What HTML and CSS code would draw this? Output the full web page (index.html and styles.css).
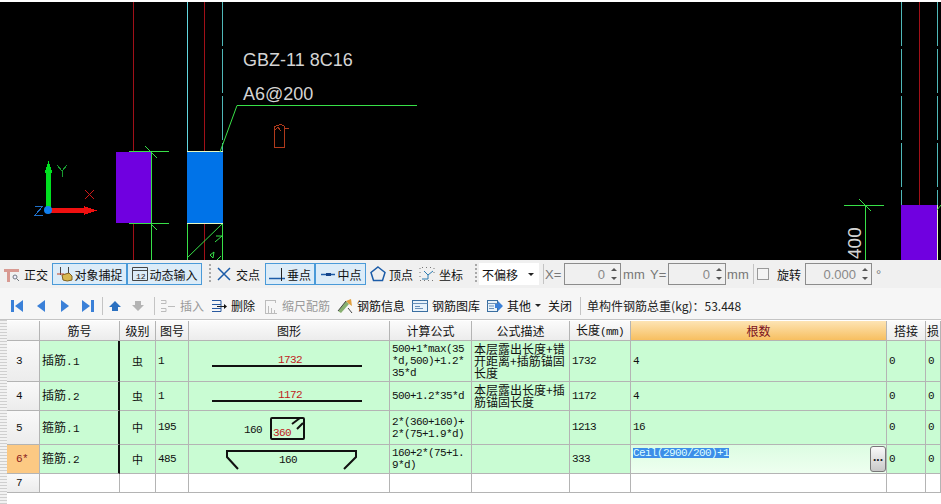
FILE: index.html
```html
<!DOCTYPE html>
<html lang="zh-CN">
<head>
<meta charset="utf-8">
<title>钢筋编辑</title>
<link rel="stylesheet" href="styles.css">
</head>
<body>
<svg class="canvas" viewBox="0 0 941 258" width="941" height="258">
  <g transform="translate(0,-2)">
    <g class="l-red"><path d="M133.500 2V152M133.500 223V260M204.500 2V152M204.500 223V260M919.500 2V205"/></g>
    <path class="l-cyan" d="M187.500 2V152"/>
    <path class="l-cyan dash" d="M222.500 2V152M901.500 2V205M937.500 2V205"/>
    <rect class="violet" x="116" y="152" width="35" height="71"/>
    <rect class="blue" x="187" y="152" width="36" height="71"/>
    <rect class="violet" x="901" y="205" width="36" height="55"/>
    <path class="l-pale" d="M187 151.500H223M187 223.500H223M937.500 205V260"/>
    <g class="l-green">
      <path d="M129 151.500H169M151.500 151V260M145 146L157 158M129 223.500H169M151 224L157 230"/>
      <path d="M220 152L237 105.500H417"/>
      <path d="M187.500 224V260M222.500 224V260M187 258L222 224M215 242L222 236L216 236M210 255L214 252L213 258ZM221 256L217 260"/>
      <path d="M844 205.500H884M865.500 205V260M859 199L871 211M937 210L941 205"/>
    </g>
    <path class="l-orange" d="M274 147V127Q280 123 284 126L285 128H289M274 131L278 127L281 131M284 128V147H274"/>
    <text class="cad" x="243" y="66">GBZ-11 8C16</text>
    <text class="cad" x="243" y="100">A6@200</text>
    <text class="cad dim" transform="translate(861,259) rotate(-90)">400</text>
    <g>
      <rect class="f-green" x="46" y="172" width="5" height="38"/>
      <path class="f-green" d="M48.500 161L52.500 173H44.500Z"/>
      <rect class="f-red" x="50" y="208" width="36" height="5"/>
      <path class="f-red" d="M97 210.500L84 206V215Z"/>
      <circle class="f-blue" cx="48" cy="210" r="4"/>
      <path class="l-dgreen" d="M57 165L62 171L67 165M62 171V177"/>
      <path class="l-dred" d="M85 190L94 199M94 190L85 199"/>
      <path class="l-dblue" d="M35 206H43L35 215H43"/>
    </g>
  </g>
</svg>

<div class="bar bar-one">
  <div class="tool">
    <svg class="ico" viewBox="0 0 16 16"><path class="i-pink" d="M0 3H15V6H6V16H3V6H0Z"/><circle class="i-glass" cx="11" cy="11" r="2"/><path class="i-glass" d="M12.500 12.500L15 15"/></svg>
    <span>正交</span>
  </div>
  <div class="toggle w75 ml4">
    <svg class="ico" viewBox="0 0 16 16"><path class="i-gold" d="M5 9L12 7L15 10V14Q10 16 6 14Z"/><path class="i-line" d="M3.500 1V9M11.500 1V7"/><path class="i-redline" d="M0 8H7"/></svg>
    <span>对象捕捉</span>
  </div>
  <div class="toggle w75">
    <svg class="ico" viewBox="0 0 16 16"><path class="i-line" d="M0.500 1.500H15.500M0.500 4.500H15.500M0.500 1.500V14.500H15.500V1.500"/><text class="i-num" x="4" y="13">12</text></svg>
    <span>动态输入</span>
  </div>
  <div class="grip ml7"></div>
  <div class="tool ml5">
    <svg class="ico" viewBox="0 0 16 16"><path class="i-blue" d="M2 2L14 14M14 2L2 14"/></svg>
    <span>交点</span>
  </div>
  <div class="toggle w50 ml5">
    <svg class="ico" viewBox="0 0 16 16"><path class="i-blue" d="M0 12.500H16"/><path class="i-black" d="M12.500 2V15"/></svg>
    <span>垂点</span>
  </div>
  <div class="toggle w51">
    <svg class="ico" viewBox="0 0 16 16"><path class="i-blue" d="M1 8.500H15"/><rect class="i-dark" x="6" y="7" width="5" height="3"/></svg>
    <span>中点</span>
  </div>
  <div class="tool ml4 gap3">
    <svg class="ico" viewBox="0 0 16 16"><path class="i-blue" d="M8 1L15 6.500L12.500 14.500H3.500L1 6.500Z"/></svg>
    <span>顶点</span>
  </div>
  <div class="tool ml6">
    <svg class="ico" viewBox="0 0 16 16"><path class="i-dots" d="M1 2V14M15 2V9M1 14.500H14M3 1.500H13"/><path class="i-blue thin" d="M5 5L9 9L14 5M9 9V13M3 13H9"/></svg>
    <span>坐标</span>
  </div>
  <div class="grip ml12"></div>
  <div class="select ml2"><span>不偏移</span><i class="caret"></i></div>
  <div class="vsep ml4"></div>
  <span class="lab w17 ml1">X=</span>
  <div class="spin w57 ml2"><span>0</span><b class="arrows"><i class="up"></i><i class="down"></i></b></div>
  <span class="lab w23 ml2">mm</span>
  <span class="lab w16 ml4">Y=</span>
  <div class="spin w58 ml2"><span>0</span><b class="arrows"><i class="up"></i><i class="down"></i></b></div>
  <span class="lab w22 ml1">mm</span>
  <div class="vsep ml4"></div>
  <div class="check ml3"></div>
  <span class="label ml8">旋转</span>
  <div class="spin w67 ml4"><span>0.000</span><b class="arrows"><i class="up"></i><i class="down"></i></b></div>
  <span class="lab ml4">°</span>
</div>

<div class="bar bar-two">
  <svg class="nav ml10" viewBox="0 0 14 14"><path class="n-blue" d="M1 1H4V13H1ZM13 1V13L5 7Z"/></svg>
  <svg class="nav ml10" viewBox="0 0 14 14"><path class="n-blue" d="M11 1V13L3 7Z"/></svg>
  <svg class="nav ml10" viewBox="0 0 14 14"><path class="n-blue" d="M3 1V13L11 7Z"/></svg>
  <svg class="nav ml9" viewBox="0 0 14 14"><path class="n-blue" d="M1 1V13L9 7ZM10 1H13V13H10Z"/></svg>
  <div class="vsep tall ml7"></div>
  <svg class="nav ml5" viewBox="0 0 14 14"><path class="n-navy" d="M7 2L13 8H10V12H4V8H1Z"/></svg>
  <svg class="nav ml9" viewBox="0 0 14 14"><path class="n-gray" d="M7 12L13 6H10V2H4V6H1Z"/></svg>
  <div class="vsep tall ml9"></div>
  <div class="tool off ml5">
    <svg class="ico" viewBox="0 0 16 16"><path class="i-faint" d="M1 2.500H6V5.500H1M1 10.500H6V13.500H1M8 8.500H15"/></svg>
    <span>插入</span>
  </div>
  <div class="tool ml7">
    <svg class="ico" viewBox="0 0 16 16"><path class="i-navy" d="M1 2.500H10V13.500H1M1 6.500H10M1 10.500H10"/><path class="i-black" d="M6 8.500H14"/><path class="i-tip" d="M13 6L16 8.500L13 11Z"/></svg>
    <span>删除</span>
  </div>
  <div class="tool off ml9 gap5">
    <svg class="ico narrow" viewBox="0 0 13 16"><path class="i-faint" d="M1 2.500H11M11.500 2V5M1.500 2V15M4.500 15V8M7.500 15V10M10.500 15V12M1 15.500H13"/></svg>
    <span>缩尺配筋</span>
  </div>
  <div class="tool ml7">
    <svg class="ico" viewBox="0 0 16 16"><path class="i-green-fill" d="M1 13L9 3L12 6L4 15Z"/><path class="i-orange-fill" d="M9 3L14 1L15 8L12 6Z"/><path class="i-line" d="M1 13L9 3M11 10L15 15"/></svg>
    <span>钢筋信息</span>
  </div>
  <div class="tool ml7">
    <svg class="ico" viewBox="0 0 16 16"><rect class="i-win" x="0.500" y="2.500" width="15" height="11"/><path class="i-winline" d="M0.500 5.500H15.500M3 8.500H8M3 10.500H11"/></svg>
    <span>钢筋图库</span>
  </div>
  <div class="tool ml7">
    <svg class="ico" viewBox="0 0 16 16"><rect class="i-win" x="0.500" y="2.500" width="10" height="11"/><path class="i-winline" d="M0.500 5.500H10.500M2 8H7M2 10.500H7"/><path class="i-arrow" d="M8 6H11V3L16 8L11 13V10H8Z"/></svg>
    <span>其他</span>
  </div>
  <i class="caret small ml4"></i>
  <span class="label ml7">关闭</span>
  <div class="vsep tall ml8"></div>
  <span class="label ml6 total">单构件钢筋总重(kg)：53.448</span>
</div>

<div class="grid-wrap">
  <div class="gutter"></div>
  <table class="grid">
    <colgroup>
      <col class="c33"><col class="c80"><col class="c36"><col class="c33"><col class="c201"><col class="c82"><col class="c98"><col class="c61"><col class="c256"><col class="c39"><col class="c15">
    </colgroup>
    <thead>
      <tr class="r-head">
        <th></th><th>筋号</th><th>级别</th><th>图号</th><th>图形</th><th>计算公式</th><th>公式描述</th><th>长度<span class="mono">(mm)</span></th><th class="active">根数</th><th>搭接</th><th>损</th>
      </tr>
    </thead>
    <tbody>
      <tr class="r41">
        <th class="num">3</th><td class="name">插筋<span class="mono">.1</span></td><td class="grade">虫</td><td class="mono">1</td>
        <td class="fig"><svg width="200" height="40" viewBox="0 0 200 40"><path class="bar-line" d="M23 25H173"/><text class="t-red" x="101" y="22">1732</text></svg></td>
        <td class="mono formula">500+1*max(35<br>*d,500)+1.2*<br>35*d</td>
        <td class="desc">本层露出长度+错<br>开距离+插筋锚固<br>长度</td>
        <td class="mono">1732</td><td class="mono">4</td><td class="mono">0</td><td class="mono">0</td>
      </tr>
      <tr class="r29">
        <th class="num">4</th><td class="name">插筋<span class="mono">.2</span></td><td class="grade">虫</td><td class="mono">1</td>
        <td class="fig"><svg width="200" height="28" viewBox="0 0 200 28"><path class="bar-line" d="M23 19H173"/><text class="t-red" x="101" y="16">1172</text></svg></td>
        <td class="mono formula">500+1.2*35*d</td>
        <td class="desc">本层露出长度+插<br>筋锚固长度</td>
        <td class="mono">1172</td><td class="mono">4</td><td class="mono">0</td><td class="mono">0</td>
      </tr>
      <tr class="r34">
        <th class="num">5</th><td class="name">箍筋<span class="mono">.1</span></td><td class="grade">中</td><td class="mono">195</td>
        <td class="fig"><svg width="200" height="33" viewBox="0 0 200 33"><text class="t-black" x="64" y="22">160</text><rect class="stirrup" x="82" y="7" width="33" height="21" rx="1"/><path class="stirrup" d="M103 13L111 7M108 18L114 12"/><text class="t-red" x="93" y="25">360</text></svg></td>
        <td class="mono formula">2*(360+160)+<br>2*(75+1.9*d)</td>
        <td class="desc"></td>
        <td class="mono">1213</td><td class="mono">16</td><td class="mono">0</td><td class="mono">0</td>
      </tr>
      <tr class="r29">
        <th class="num current">6*</th><td class="name">箍筋<span class="mono">.2</span></td><td class="grade">中</td><td class="mono">485</td>
        <td class="fig"><svg width="200" height="28" viewBox="0 0 200 28"><path class="stirrup" d="M49 24L38 12V6H167V12L155 24"/><text class="t-black" x="99" y="18">160</text></svg></td>
        <td class="mono formula">160+2*(75+1.<br>9*d)</td>
        <td class="desc"></td>
        <td class="mono">333</td>
        <td class="editor"><div class="edit-box"><span class="mono selected">Ceil(2900/200)+1</span><span class="more">...</span></div></td>
        <td class="mono">0</td><td class="mono">0</td>
      </tr>
      <tr class="r19 empty">
        <th class="num">7</th><td></td><td></td><td></td><td></td><td></td><td></td><td></td><td></td><td></td><td></td>
      </tr>
    </tbody>
  </table>
</div>
</body>
</html>
```
FILE: styles.css
```css
* { box-sizing: border-box; }
html, body { margin: 0; padding: 0; }
body {
  width: 941px; height: 504px; overflow: hidden; background: #fff; padding-top: 2px;
  font-family: "Noto Sans CJK SC", "Liberation Sans", sans-serif; font-size: 12px; color: #111;
}

/* CAD canvas */
.canvas { display: block; background: #000; }
.canvas path, .canvas rect { shape-rendering: crispEdges; }
.l-red path, .l-red { fill: none; stroke: #a01018; }
.l-cyan { fill: none; stroke: #62d6df; }
.dash { stroke-dasharray: 44 3; stroke: #4fb8b8; }
.violet { fill: #7000e0; }
.blue { fill: #0073e8; }
.l-pale { fill: none; stroke: #e8f8c0; }
.l-green path { fill: none; stroke: #38e048; shape-rendering: auto; }
.l-orange { fill: none; stroke: #b03a1c; }
.cad { font-family: "Liberation Sans", sans-serif; font-size: 18px; fill: #d4d4d4; }
.dim { font-size: 19px; }
.f-green { fill: #00e020; }
.f-red { fill: #f01010; }
.f-blue { fill: #1080f0; }
.l-dgreen { fill: none; stroke: #189a30; }
.l-dred { fill: none; stroke: #d01818; }
.l-dblue { fill: none; stroke: #2070c8; }

/* toolbars */
.bar { display: flex; align-items: center; }
.bar-one { height: 28px; padding-left: 4px; background: #f0f0f0; }
.bar-two { height: 32px; background: #f6f6f6; border-bottom: 1px solid #c4c4c4; padding-top: 4px; }
.tool { display: flex; align-items: center; gap: 4px; flex: none; }
.tool.off { color: #9a9a9a; }
.gap3 { gap: 3px; }
.gap5 { gap: 5px; }
.ico { width: 16px; height: 16px; flex: none; }
.ico.narrow { width: 13px; }
.toggle {
  display: flex; align-items: center; justify-content: center; gap: 2px; height: 22px; flex: none;
  background: #dcecf8; border: 1px solid #4a9ad8;
}
.w75 { width: 75px; }
.w50 { width: 50px; }
.w51 { width: 51px; }
.w17 { width: 17px; }
.w23 { width: 23px; }
.w16 { width: 16px; }
.w22 { width: 22px; }
.w57 { width: 57px; }
.w58 { width: 58px; }
.w67 { width: 67px; }
.ml1 { margin-left: 1px; }
.ml2 { margin-left: 2px; }
.ml3 { margin-left: 3px; }
.ml4 { margin-left: 4px; }
.ml5 { margin-left: 5px; }
.ml6 { margin-left: 6px; }
.ml7 { margin-left: 7px; }
.ml8 { margin-left: 8px; }
.ml9 { margin-left: 9px; }
.ml10 { margin-left: 10px; }
.ml12 { margin-left: 12px; }
.grip { width: 2px; height: 20px; flex: none; background: repeating-linear-gradient(#a8a8a8 0 2px, transparent 2px 4px); }
.select { display: flex; align-items: center; justify-content: space-between; width: 60px; height: 22px; padding: 0 5px 0 3px; background: #fff; flex: none; }
.caret { display: block; width: 0; height: 0; border: 3px solid transparent; border-top: 3px solid #222; border-bottom: 0; flex: none; }
.vsep { width: 1px; height: 20px; background: #c4c4c4; flex: none; }
.vsep.tall { height: 18px; }
.lab { font-family: "Liberation Sans", sans-serif; font-size: 13px; color: #777; flex: none; }
.label { flex: none; }
.total { font-size: 12px; color: #222; }
.spin {
  display: flex; align-items: center; justify-content: flex-end; gap: 6px; height: 22px; flex: none;
  padding-right: 3px; border: 1px solid #8c8c8c; background: #f0f0f0;
  font-family: "Liberation Sans", sans-serif; font-size: 13px; color: #888;
}
.arrows { display: flex; flex-direction: column; gap: 6px; }
.up, .down { display: block; width: 0; height: 0; border: 3px solid transparent; }
.up { border-top: 0; border-bottom: 3px solid #555; }
.down { border-bottom: 0; border-top: 3px solid #555; }
.check { width: 12px; height: 12px; border: 1px solid #999; background: #f4f4f4; flex: none; }
.nav { width: 14px; height: 14px; flex: none; }
.n-blue { fill: #3a80d8; }
.n-navy { fill: #2a70c0; }
.n-gray { fill: #b4b4b4; }

.i-pink { fill: #d89a92; }
.i-glass { fill: #eef; stroke: #707880; }
.i-gold { fill: #d8b850; stroke: #806020; }
.i-line { fill: none; stroke: #444; }
.i-redline { fill: none; stroke: #c04020; }
.i-num { font-family: "Liberation Mono", monospace; font-size: 8px; fill: #222; }
.i-blue { fill: none; stroke: #1c5ca8; stroke-width: 1.500; }
.i-blue.thin { stroke-width: 1; stroke: #2a7ab0; }
.i-black { fill: none; stroke: #222; }
.i-tip { fill: #111; }
.i-dark { fill: #14448a; }
.i-dots { fill: none; stroke: #777; stroke-dasharray: 1 3; }
.i-faint { fill: none; stroke: #bcbcbc; }
.i-navy { fill: none; stroke: #2a5aa0; }
.i-green-fill { fill: #88b070; }
.i-orange-fill { fill: #e0a040; }
.i-win { fill: #e8f2fa; stroke: #3a6ea0; }
.i-winline { fill: none; stroke: #6a90b8; }
.i-arrow { fill: #3a80d8; }

/* grid */
.grid-wrap { display: flex; height: 184px; padding-top: 1px; }
.gutter { width: 7px; flex: none; margin-top: -1px; background: repeating-linear-gradient(#cfcfcf 0 1px, #f2f2f2 1px 3px); }
.grid { table-layout: fixed; width: 934px; height: 172px; border-collapse: separate; border-spacing: 0; }
.c33 { width: 33px; } .c80 { width: 80px; } .c36 { width: 36px; } .c201 { width: 201px; }
.c82 { width: 82px; } .c98 { width: 98px; } .c61 { width: 61px; } .c256 { width: 256px; }
.c39 { width: 39px; } .c15 { width: 15px; }
.grid th, .grid td { padding: 0 0 0 2px; border-right: 1px solid #b4b4b4; border-bottom: 1px solid #b4b4b4; overflow: hidden; white-space: nowrap; }
.r-head { height: 20px; }
.r41 { height: 41px; } .r29 { height: 29px; } .r34 { height: 34px; } .r19 { height: 19px; }
.r-head th { padding: 0; font-weight: 400; line-height: 16px; background: linear-gradient(#fbfbfb, #ececec); color: #111; }
.r-head th.active { background: linear-gradient(#fde4b4, #f7bf60); color: #7a1020; }
.grid td { background: #c9fcd3; line-height: 13px; }
.empty td { background: #fff; }
.grid .num { padding: 0 0 0 9px; font-family: "Liberation Mono", monospace; font-size: 11px; letter-spacing: -.6px; font-weight: 400; text-align: left; background: linear-gradient(#f9f9f9, #ececec); }
.grid .num.current { background: #fcc983; color: #8a2020; }
.mono { font-family: "Liberation Mono", "Noto Sans CJK SC", monospace; font-size: 11px; letter-spacing: -.6px; }
.grid .name { border-right: 2px solid #111; padding-left: 2px; }
.name .mono { letter-spacing: .4px; }
.grid .grade { text-align: center; padding: 0; font-size: 11px; }
.grid .fig { padding: 0; }
.fig svg { display: block; }
.bar-line { stroke: #111; stroke-width: 2; fill: none; }
.stirrup { stroke: #111; stroke-width: 2; fill: none; }
.t-red { font-family: "Liberation Mono", monospace; font-size: 11px; letter-spacing: -.6px; text-anchor: middle; fill: #c02020; }
.t-black { font-family: "Liberation Mono", monospace; font-size: 11px; letter-spacing: -.6px; text-anchor: middle; fill: #111; }
.grid .formula { line-height: 12px; }
.grid .desc { line-height: 12px; }
.grid .editor { padding: 0; background: linear-gradient(#dcfde2, #eefff0); vertical-align: top; }
.edit-box { display: flex; justify-content: space-between; align-items: flex-start; height: 28px; padding: 3px 0 0 2px; }
.selected { display: block; background: #3d8ee8; color: #dff; line-height: 10px; height: 10px; }
.more {
  display: block; width: 16px; height: 26px; margin: -2px 0 0; border: 1px solid #777; border-radius: 3px; text-align: center;
  font-family: "Liberation Sans", sans-serif; font-size: 12px; font-weight: 700; line-height: 20px; color: #222;
  background: linear-gradient(#fafafa, #c8c8c8);
}
```
